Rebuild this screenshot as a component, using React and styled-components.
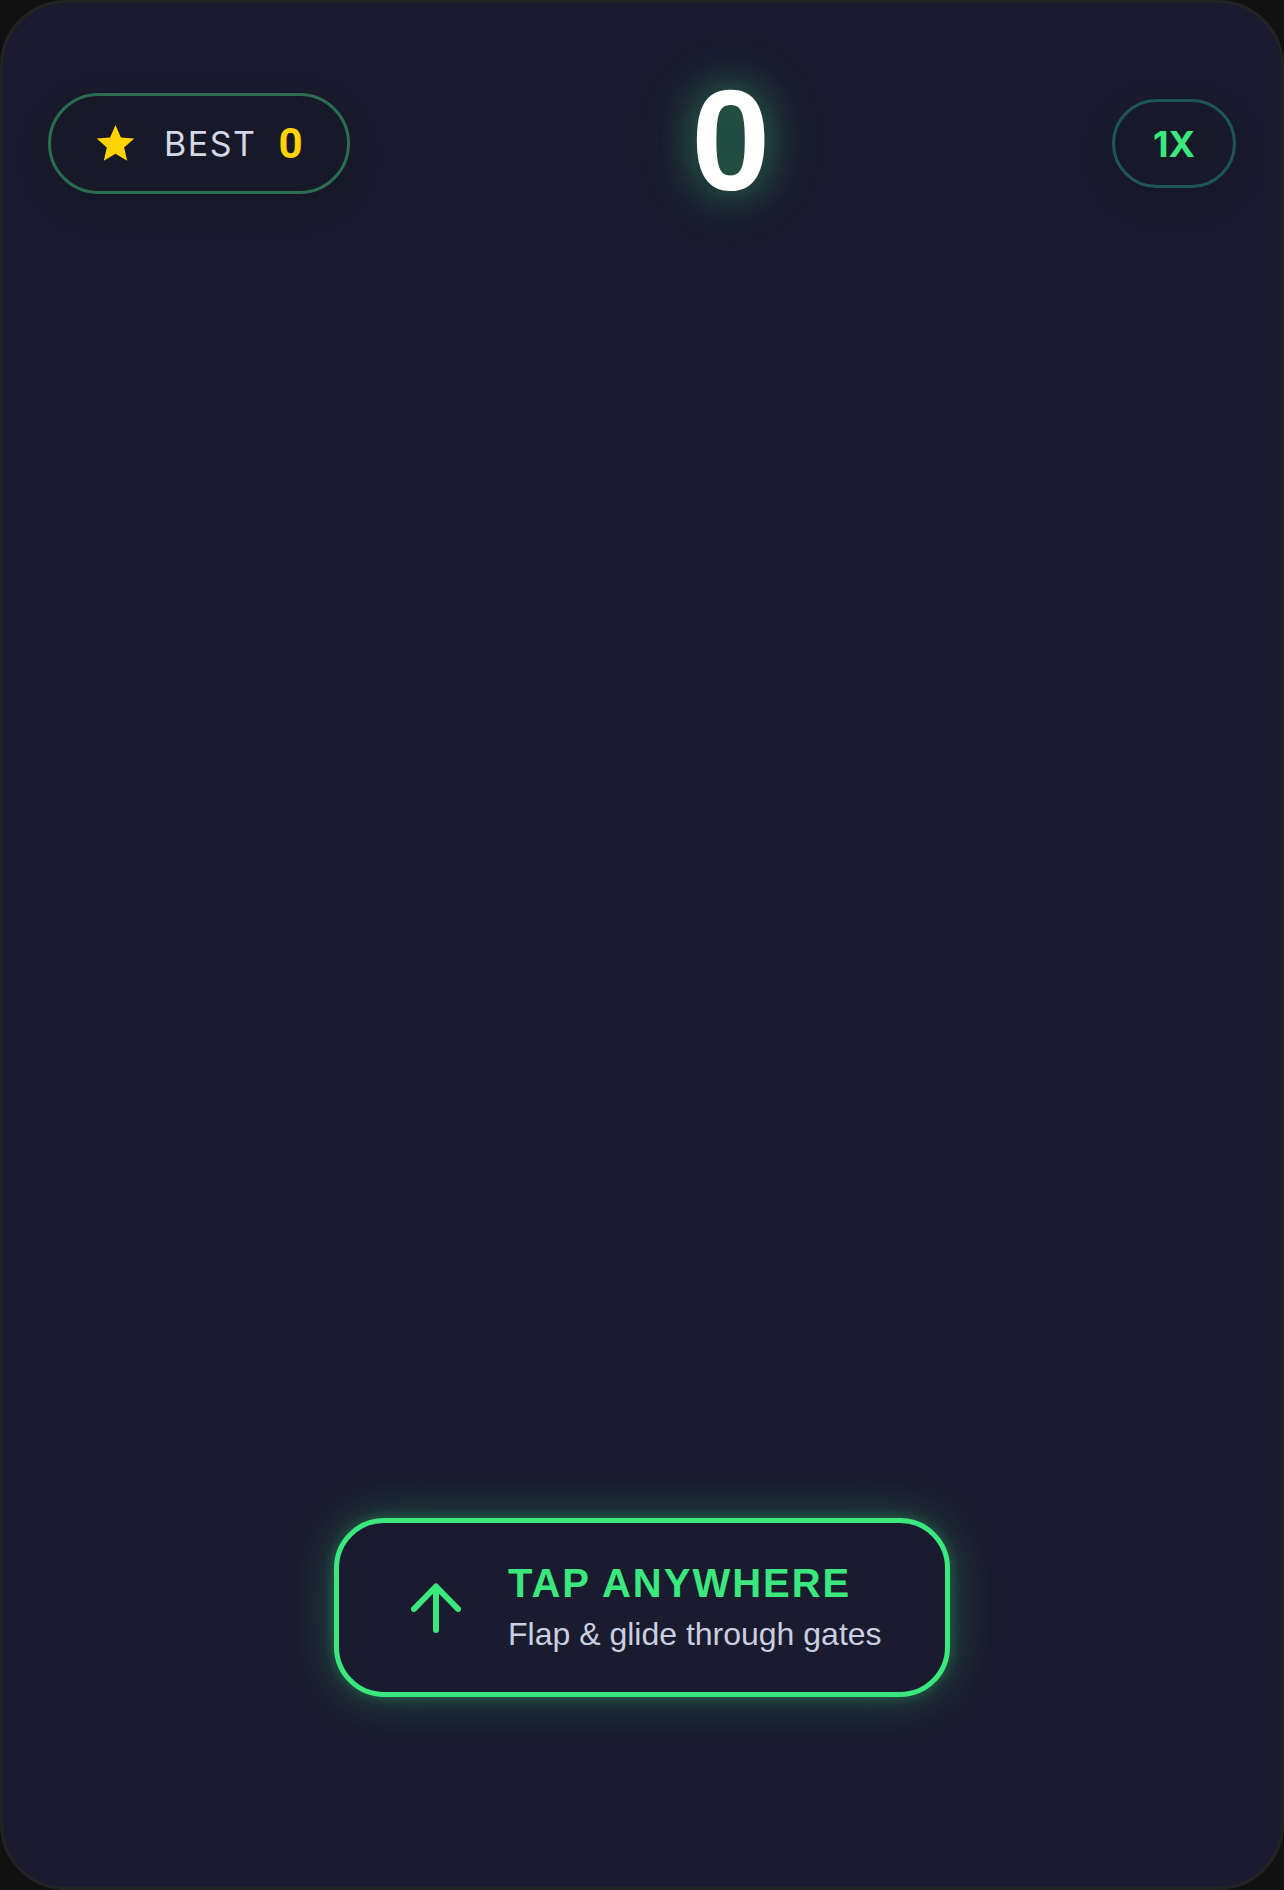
import React from 'react';
import styled, { createGlobalStyle } from 'styled-components';

const GlobalStyle = createGlobalStyle`
  html, body {
    margin: 0;
    padding: 0;
    background: #111111;
  }
  * {
    box-sizing: border-box;
  }
`;

const Screen = styled.div`
  width: 1284px;
  height: 1890px;
  background: #1a1b2e;
  border: 3px solid #232323;
  border-radius: 66px;
  display: flex;
  flex-direction: column;
  overflow: hidden;
  font-family: Inter, "Liberation Sans", sans-serif;
`;

const Header = styled.div`
  display: flex;
  justify-content: space-between;
  align-items: center;
  height: 191px;
  padding: 90px 45px 0;
`;

const Pill = styled.div`
  display: flex;
  align-items: center;
  gap: ${(p) => p.gap || 0}px;
  height: ${(p) => p.h}px;
  padding: 0 ${(p) => p.px}px;
  border: 3px solid ${(p) => p.edge};
  border-radius: 999px;
  background: #171828;
  box-shadow: 0 12px 36px rgba(0, 0, 0, 0.22);
`;

const BestLabel = styled.span`
  font-size: 34px;
  font-weight: 400;
  letter-spacing: 1.5px;
  color: #d4d8e6;
  margin-right: -6px;
`;

const BestValue = styled.span`
  font-family: Roboto, Inter, sans-serif;
  font-size: 42px;
  font-weight: 700;
  color: #ffd400;
`;

const Speed = styled.span`
  font-size: 36px;
  font-weight: 700;
  color: #3be87e;
`;

const Score = styled.div`
  font-family: "Liberation Sans", Arial, sans-serif;
  font-size: 142px;
  font-weight: 700;
  line-height: 101px;
  height: 101px;
  color: #ffffff;
  text-shadow: 0 0 36px rgba(59, 232, 126, 0.45), 0 0 70px rgba(59, 232, 126, 0.2);
  margin-top: -6px;
`;

const Playfield = styled.div`
  flex: 1;
`;

const Footer = styled.div`
  display: flex;
  justify-content: center;
  padding-bottom: 190px;
`;

const TapCard = styled.div`
  width: 616px;
  height: 179px;
  display: flex;
  align-items: center;
  gap: 47px;
  padding: 0 40px 0 72px;
  border: 5px solid #3be87e;
  border-radius: 50px;
  background: #1a1b2e;
  box-shadow: 0 0 44px rgba(59, 232, 126, 0.3), 0 0 12px rgba(59, 232, 126, 0.25);
`;

const TextCol = styled.div`
  display: flex;
  flex-direction: column;
  gap: 10px;
`;

const TapTitle = styled.div`
  font-family: "Liberation Sans", Arial, sans-serif;
  font-size: 40px;
  font-weight: 700;
  letter-spacing: 2px;
  line-height: 1.1;
  color: #3be87e;
`;

const TapSub = styled.div`
  font-family: "Liberation Sans", Arial, sans-serif;
  font-size: 32px;
  line-height: 1.2;
  color: #c9cee0;
  white-space: nowrap;
`;

function Star() {
  return (
    <svg width="41" height="39" viewBox="0 0 24 23">
      <path
        d="M12 0.6l3.2 7.3 7.9 0.7-6 5.3 1.8 7.8L12 17.6 5.1 21.7l1.8-7.8-6-5.3 7.9-0.7z"
        fill="#ffd400"
      />
    </svg>
  );
}

function ArrowUp() {
  return (
    <svg width="50" height="50" viewBox="0 0 50 50" fill="none">
      <path
        d="M3 26L25 3.5L47 26M25 4v43"
        stroke="#3be87e"
        strokeWidth="6"
        strokeLinecap="round"
        strokeLinejoin="round"
      />
    </svg>
  );
}

export default function App() {
  return (
    <>
      <GlobalStyle />
      <Screen>
        <Header>
          <Pill h={101} px={44} gap={28} edge="#2a6d50">
            <Star />
            <BestLabel>BEST</BestLabel>
            <BestValue>0</BestValue>
          </Pill>
          <Score>0</Score>
          <Pill h={89} px={38} edge="#1e5658">
            <Speed>1X</Speed>
          </Pill>
        </Header>
        <Playfield />
        <Footer>
          <TapCard>
            <ArrowUp />
            <TextCol>
              <TapTitle>TAP ANYWHERE</TapTitle>
              <TapSub>Flap &amp; glide through gates</TapSub>
            </TextCol>
          </TapCard>
        </Footer>
      </Screen>
    </>
  );
}
